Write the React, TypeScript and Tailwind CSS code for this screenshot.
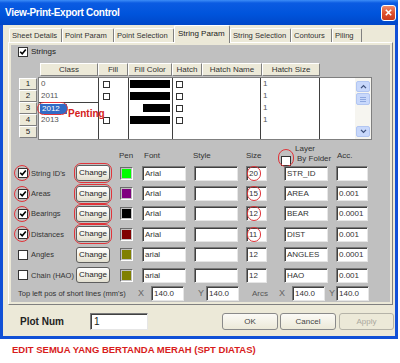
import React from 'react';

type Row = {
  label: string;
  checked: boolean;
  mark: boolean;
  swatch: string;
  font: string;
  size: string;
  layer: string;
  acc: string;
};

const rows: Row[] = [
  { label: "String ID's", checked: true, mark: true, swatch: 'bg-[#00ff00]', font: 'Arial', size: '20', layer: 'STR_ID', acc: '' },
  { label: 'Areas', checked: true, mark: true, swatch: 'bg-[#800080]', font: 'Arial', size: '15', layer: 'AREA', acc: '0.001' },
  { label: 'Bearings', checked: true, mark: true, swatch: 'bg-[#000000]', font: 'Arial', size: '12', layer: 'BEAR', acc: '0.0001' },
  { label: 'Distances', checked: true, mark: true, swatch: 'bg-[#800000]', font: 'Arial', size: '11', layer: 'DIST', acc: '0.001' },
  { label: 'Angles', checked: false, mark: false, swatch: 'bg-[#808000]', font: 'arial', size: '12', layer: 'ANGLES', acc: '0.0001' },
  { label: 'Chain (HAO)', checked: false, mark: false, swatch: 'bg-[#808000]', font: 'arial', size: '12', layer: 'HAO', acc: '0.001' },
];

const tabs: [string, string][] = [
  ['Sheet Details', 'w-[53px]'],
  ['Point Param', 'w-[52px]'],
  ['Point Selection', 'w-[60px]'],
  ['String Param', 'w-[56px]'],
  ['String Selection', 'w-[61px]'],
  ['Contours', 'w-[41px]'],
  ['Piling', 'w-[30px]'],
];

const headers: [string, string][] = [
  ['Class', 'w-[58px]'],
  ['Fill', 'w-[30px]'],
  ['Fill Color', 'w-[44px]'],
  ['Hatch', 'w-[30px]'],
  ['Hatch Name', 'w-[60px]'],
  ['Hatch Size', 'w-[58px]'],
];

const classes = ['0', '2011', '2012', '2013', ''];

const Check = ({ checked = false }: { checked?: boolean }) => (
  <span className="w-[10px] h-[10px] shrink-0 bg-white border border-[#333] flex items-center justify-center">
    {checked && (
      <svg viewBox="0 0 8 8" className="w-[8px] h-[8px]">
        <path d="M1.2 3.8 L3.2 5.8 L6.8 1.4" fill="none" stroke="#000" strokeWidth="1.6" />
      </svg>
    )}
  </span>
);

const MiniCheck = () => <span className="block w-[7px] h-[7px] bg-white border border-[#333]" />;

const Field = ({ value, w, circle }: { value: string; w: string; circle?: boolean }) => (
  <div
    className={`relative shrink-0 h-[15px] bg-white border border-t-[#7a7a7a] border-l-[#7a7a7a] border-b-[#e6e6e6] border-r-[#e6e6e6] shadow-[inset_1px_1px_0_#404040] pl-[2px] text-[8px] leading-[13px] text-[#333] ${w}`}
  >
    {value}
    {circle && <span className="absolute left-[0px] top-[-1px] w-[14px] h-[15px] rounded-full border border-[#e0343a]" />}
  </div>
);

const ChangeBtn = ({ mark }: { mark: boolean }) => (
  <div className="relative w-[34px] h-[16px] shrink-0">
    <div className="w-full h-full rounded-[3px] border border-[#5e5e5e] bg-[linear-gradient(180deg,#ffffff_0%,#f3f1e8_50%,#e2dfd0_100%)] flex items-center justify-center text-[8px] text-[#222]">
      Change
    </div>
    {mark && <span className="absolute left-[-2px] top-[-2px] w-[38px] h-[20px] rounded-[7px] border border-[#e0343a]" />}
  </div>
);

const raised = 'border border-t-white border-l-white border-r-[#808080] border-b-[#808080]';

export default function App() {
  return (
    <div className="w-[400px] h-[363px] bg-white overflow-hidden font-['Liberation_Sans',Arial,sans-serif] text-[#222]">
      <div className="w-[398px] h-[339px] flex flex-col">
        {/* title bar */}
        <div className="h-[25px] shrink-0 flex items-center pl-[5px] pr-[2px] bg-[linear-gradient(180deg,#3d8df7_0%,#0b5be2_12%,#0054dc_55%,#0047c8_100%)]">
          <span className="flex-1 text-white font-bold text-[10px] tracking-[-0.3px]">View-Print-Export Control</span>
          <div className="w-[15px] h-[16px] rounded-[3px] border border-white bg-[linear-gradient(180deg,#ef8d6c_0%,#e0522f_50%,#c9391c_100%)] flex items-center justify-center">
            <svg viewBox="0 0 10 10" className="w-[9px] h-[9px]">
              <path d="M2 2 L8 8 M8 2 L2 8" stroke="#fff" strokeWidth="1.8" />
            </svg>
          </div>
        </div>

        <div className="flex-1 flex flex-col bg-[#ece9d8] border-x-[3px] border-b-[3px] border-[#1150d6]">
          {/* tabs */}
          <div className="h-[17px] shrink-0 flex items-end pl-[6px]">
            {tabs.map(([t, w]) =>
              t === 'String Param' ? (
                <div
                  key={t}
                  className={`${w} h-[18px] mb-[-1px] relative z-10 bg-[#ece9d8] border-t border-l border-r border-t-white border-l-white border-r-[#808080] rounded-t-[2px] pl-[3px] pt-[2px] text-[8px] leading-[11px] whitespace-nowrap`}
                >
                  {t}
                </div>
              ) : (
                <div
                  key={t}
                  className={`${w} h-[14px] bg-[#ece9d8] border-t border-l border-r border-t-white border-l-white border-r-[#808080] rounded-t-[2px] pl-[2px] pt-[1px] text-[7.6px] leading-[11px] text-[#333] whitespace-nowrap overflow-hidden`}
                >
                  {t}
                </div>
              )
            )}
          </div>

          {/* tab page */}
          <div className={`ml-[5px] mr-[2px] h-[263px] shrink-0 p-[2px] ${raised}`}>
            <div className="h-full bg-[#c0c0c0] flex flex-col">
              <div className="mt-[2px] ml-[7px] h-[10px] flex items-center gap-[3px] text-[8px]">
                <Check checked />
                <span>Strings</span>
              </div>

              {/* class table */}
              <div className="ml-[8px] mt-[6px] flex flex-col">
                <div className="flex h-[13px]">
                  <div className="w-[21px]" />
                  {headers.map(([h, w]) => (
                    <div key={h} className={`${w} h-full bg-[#ece9d8] ${raised} flex items-center justify-center text-[8px] text-[#333]`}>
                      {h}
                    </div>
                  ))}
                </div>
                <div className="flex mt-[1px] h-[63px]">
                  <div className="w-[19px] pt-[1px] flex flex-col">
                    {[1, 2, 3, 4, 5].map((n) => (
                      <div key={n} className={`w-[18px] h-[12px] bg-[#ece9d8] ${raised} flex items-center justify-center text-[8px]`}>
                        {n}
                      </div>
                    ))}
                  </div>
                  <div className="w-[334px] h-full bg-white border border-[#7f7f7f] flex">
                    {/* Class */}
                    <div className="w-[60px] h-full border-r border-[#404040] flex flex-col">
                      {classes.map((c, i) =>
                        i === 2 ? (
                          <div key={i} className="h-[12px] flex items-center pl-[1px] border-t border-[#404040] relative">
                            <span className="bg-[#316ac5] text-white text-[8px] leading-[10px] px-[2px] w-[27px]">2012</span>
                            <span className="absolute left-[-2px] top-[-1px] w-[31px] h-[13px] rounded-full border border-[#e0343a]" />
                            <span className="absolute left-[29px] top-[3px] text-[10px] font-bold text-[#d42020] whitespace-nowrap z-10">Penting</span>
                          </div>
                        ) : (
                          <div key={i} className="h-[12px] flex items-center pl-[2px] text-[8px] text-[#555]">
                            {c}
                          </div>
                        )
                      )}
                    </div>
                    {/* Fill */}
                    <div className="w-[30px] h-full border-r border-[#404040] flex flex-col">
                      {[0, 1, 2, 3, 4].map((i) => (
                        <div key={i} className="h-[12px] flex items-center pl-[4px]">
                          {(i === 0 || i === 1 || i === 3) && <MiniCheck />}
                        </div>
                      ))}
                    </div>
                    {/* Fill color */}
                    <div className="w-[44px] h-full border-r border-[#404040] flex flex-col">
                      {[0, 1, 2, 3, 4].map((i) => (
                        <div key={i} className="h-[12px] flex items-center">
                          {i === 2 ? (
                            <span className="ml-[14px] w-[27px] h-[8px] bg-black" />
                          ) : i < 4 ? (
                            <span className="ml-[1px] w-[40px] h-[8px] bg-black" />
                          ) : null}
                        </div>
                      ))}
                    </div>
                    {/* Hatch */}
                    <div className="w-[30px] h-full flex flex-col">
                      {[0, 1, 2, 3, 4].map((i) => (
                        <div key={i} className="h-[12px] flex items-center pl-[3px]">
                          {i < 4 && <MiniCheck />}
                        </div>
                      ))}
                    </div>
                    {/* Hatch name */}
                    <div className="w-[58px] h-full border-r border-[#404040]" />
                    {/* Hatch size */}
                    <div className="w-[59px] h-full border-r border-[#404040] flex flex-col">
                      {[0, 1, 2, 3, 4].map((i) => (
                        <div key={i} className="h-[12px] flex items-center pl-[2px] text-[8px] text-[#555]">
                          {i < 4 ? '1' : ''}
                        </div>
                      ))}
                    </div>
                    <div className="w-[35px] h-full" />
                    {/* scrollbar */}
                    <div className="w-[16px] h-full bg-[#f6f5f0] flex flex-col items-center">
                      <div className="mt-[3px] w-[14px] h-[11px] rounded-[2px] bg-[#c8d8fb] border border-[#b2c6f2] flex items-center justify-center">
                        <svg viewBox="0 0 8 6" className="w-[7px] h-[5px]">
                          <path d="M1 5 L4 2 L7 5" fill="none" stroke="#3c4f7a" strokeWidth="1.5" />
                        </svg>
                      </div>
                      <div className="mt-[1px] w-[14px] h-[12px] rounded-[2px] bg-[#c8d8fb] border border-[#b2c6f2] flex flex-col items-center justify-center gap-[1px]">
                        <span className="w-[6px] h-[1px] bg-[#8ea8e0]" />
                        <span className="w-[6px] h-[1px] bg-[#8ea8e0]" />
                        <span className="w-[6px] h-[1px] bg-[#8ea8e0]" />
                      </div>
                      <div className="flex-1" />
                      <div className="mb-[2px] w-[14px] h-[11px] rounded-[2px] bg-[#c8d8fb] border border-[#b2c6f2] flex items-center justify-center">
                        <svg viewBox="0 0 8 6" className="w-[7px] h-[5px]">
                          <path d="M1 1 L4 4 L7 1" fill="none" stroke="#3c4f7a" strokeWidth="1.5" />
                        </svg>
                      </div>
                    </div>
                  </div>
                </div>
              </div>

              {/* string settings header */}
              <div className="h-[23px] shrink-0 flex text-[8px] text-[#333]">
                <div className="w-[108px]" />
                <div className="w-[25px] pt-[10px]">Pen</div>
                <div className="w-[49px] pt-[10px]">Font</div>
                <div className="w-[53px] pt-[10px]">Style</div>
                <div className="w-[35px] pt-[10px]">Size</div>
                <div className="w-[56px] flex">
                  <div className="relative mt-[16px] h-[10px]">
                    <Check />
                    <span className="absolute left-[-3px] top-[-7px] w-[16px] h-[18px] rounded-full border border-[#e0343a]" />
                  </div>
                  <div className="ml-[4px] pt-[4px] flex flex-col leading-[10px]">
                    <span>Layer</span>
                    <span className="pl-[2px]">By Folder</span>
                  </div>
                </div>
                <div className="pt-[10px]">Acc.</div>
              </div>

              {rows.map((r) => (
                <div key={r.label} className="h-[20.4px] shrink-0 flex items-center pl-[7px] text-[8px]">
                  <div className="relative">
                    <Check checked={r.checked} />
                    {r.mark && <span className="absolute left-[-4px] top-[-3px] w-[16px] h-[16px] rounded-full border border-[#e0343a]" />}
                  </div>
                  <span className="ml-[3px] w-[45px] text-[7.5px] text-[#333] whitespace-nowrap">{r.label}</span>
                  <ChangeBtn mark={r.mark} />
                  <div className="ml-[10px] w-[13px] h-[13px] shrink-0 border border-t-[#6a6a6a] border-l-[#6a6a6a] border-b-white border-r-white p-[1px]">
                    <div className={`w-full h-full ${r.swatch}`} />
                  </div>
                  <div className="ml-[9px]">
                    <Field value={r.font} w="w-[44px]" />
                  </div>
                  <div className="ml-[8px]">
                    <Field value="" w="w-[44px]" />
                  </div>
                  <div className="ml-[8px]">
                    <Field value={r.size} w="w-[21px]" circle={r.mark} />
                  </div>
                  <div className="ml-[17px]">
                    <Field value={r.layer} w="w-[44px]" />
                  </div>
                  <div className="ml-[8px]">
                    <Field value={r.acc} w="w-[32px]" />
                  </div>
                </div>
              ))}

              <div className="h-[15px] mt-[1px] shrink-0 flex items-center pl-[7px] text-[8px] text-[#333]">
                <span className="w-[120px] text-[7.5px] whitespace-nowrap">Top left pos of short lines (mm's)</span>
                <span className="w-[13px] text-[9px] text-[#666]">X</span>
                <Field value="140.0" w="w-[33px]" />
                <span className="ml-[14px] w-[8px] text-[9px] text-[#666]">Y</span>
                <Field value="140.0" w="w-[33px]" />
                <span className="ml-[13px] w-[27px] text-[#555]">Arcs</span>
                <span className="w-[13px] text-[9px] text-[#666]">X</span>
                <Field value="140.0" w="w-[33px]" />
                <span className="ml-[4px] w-[7px] text-[9px] text-[#666]">Y</span>
                <Field value="140.0" w="w-[33px]" />
              </div>
            </div>
          </div>

          {/* bottom bar */}
          <div className="flex-1 flex items-center pl-[17px] pr-[1px] pt-[2px]">
            <span className="w-[70px] text-[10px] font-bold text-[#222]">Plot Num</span>
            <div className="w-[58px] h-[17px] bg-white border border-t-[#7a7a7a] border-l-[#7a7a7a] border-b-[#e6e6e6] border-r-[#e6e6e6] shadow-[inset_1px_1px_0_#404040] pl-[3px] text-[10px] leading-[15px]">
              1
            </div>
            <div className="flex-1" />
            <div className="w-[56px] h-[17px] rounded-[3px] border border-[#8a8a8a] bg-[linear-gradient(180deg,#fbfaf6_0%,#ece9d8_100%)] flex items-center justify-center text-[8px] text-[#444]">
              OK
            </div>
            <div className="ml-[2px] w-[56px] h-[17px] rounded-[3px] border border-[#8a8a8a] bg-[linear-gradient(180deg,#fbfaf6_0%,#ece9d8_100%)] flex items-center justify-center text-[8px] text-[#444]">
              Cancel
            </div>
            <div className="ml-[3px] w-[55px] h-[17px] rounded-[3px] border border-[#b5b3a8] bg-[#ece9d8] flex items-center justify-center text-[8px] text-[#aaa89e]">
              Apply
            </div>
          </div>
        </div>
      </div>

      <div className="pl-[12px] pt-[5px] text-[9.5px] leading-[11px] font-bold text-[#d81c1c] whitespace-nowrap">
        EDIT SEMUA YANG BERTANDA MERAH (SPT DIATAS)
      </div>
    </div>
  );
}
